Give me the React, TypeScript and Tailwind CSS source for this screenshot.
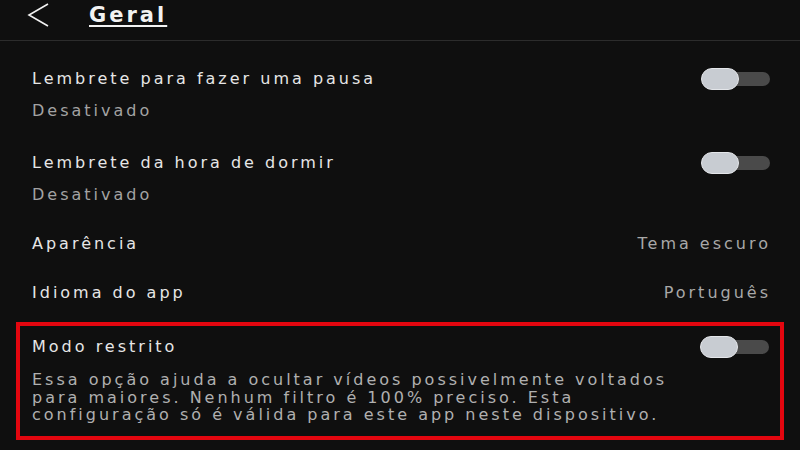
import React from 'react';

const font = 'font-["DejaVu_Sans",sans-serif]';

function Toggle() {
  return (
    <div className="relative w-[69px] h-[22px] shrink-0">
      <div className="absolute right-0 top-[4px] h-[14px] w-[60px] rounded-full bg-[#4a4a4a]" />
      <div className="absolute left-0 top-0 h-[22px] w-[38px] rounded-full bg-[#c8ccd2] border border-[#e4e6ea]" />
    </div>
  );
}

function ToggleRow({ title, status, className }: { title: string; status: string; className: string }) {
  return (
    <div className={className}>
      <div className="flex items-center justify-between">
        <span className="text-[16px] leading-[24px] tracking-[3px] text-[#e6e6e6]">{title}</span>
        <div className="mr-[-2px]">
          <Toggle />
        </div>
      </div>
      <div className="mt-[8px] text-[16px] leading-[24px] tracking-[3px] text-[#a3a3a3]">{status}</div>
    </div>
  );
}

function ValueRow({ label, value, className }: { label: string; value: string; className: string }) {
  return (
    <div className={`flex items-center justify-between ${className}`}>
      <span className="text-[16px] leading-[24px] tracking-[3px] text-[#e6e6e6]">{label}</span>
      <span className="text-[16px] leading-[24px] tracking-[3px] text-[#a8a8a8] mr-[-3px]">{value}</span>
    </div>
  );
}

export default function App() {
  return (
    <div className={`w-[800px] h-[450px] overflow-hidden bg-[#0f0f0f] ${font}`}>
      {/* Header */}
      <header className="h-[41px] border-b border-[#2c2c2c] flex items-start">
        <svg className="ml-[27px] mt-[2px]" width="24" height="26" viewBox="0 0 24 26" fill="none">
          <polyline points="21,2 2,13 21,24" stroke="#f2f2f2" strokeWidth="1.6" strokeLinejoin="miter" />
        </svg>
        <h1 className="ml-[38px] mt-[1px] text-[21px] leading-[28px] font-bold tracking-[3px] text-[#f2f2f2] underline underline-offset-[3px] decoration-[2px]">
          Geral
        </h1>
      </header>

      <div className="px-[32px]">
        <ToggleRow className="pt-[26px]" title="Lembrete para fazer uma pausa" status="Desativado" />
        <ToggleRow className="mt-[28px]" title="Lembrete da hora de dormir" status="Desativado" />
        <ValueRow className="mt-[25px]" label="Aparência" value="Tema escuro" />
        <ValueRow className="mt-[25px]" label="Idioma do app" value="Português" />
      </div>

      {/* Restricted mode */}
      <div className="mt-[17px] mx-[16px] h-[118px] border-[4px] border-[#e3060f] pl-[12px] pr-[11px] pt-[9px]">
        <div className="flex items-center justify-between">
          <span className="text-[16px] leading-[24px] tracking-[3px] text-[#e6e6e6]">Modo restrito</span>
          <Toggle />
        </div>
        <p className="mt-[12px] text-[16px] leading-[17.5px] tracking-[3px] text-[#b0b0b0]">
          Essa opção ajuda a ocultar vídeos possivelmente voltados
          <br />
          para maiores. Nenhum filtro é 100% preciso. Esta
          <br />
          configuração só é válida para este app neste dispositivo.
        </p>
      </div>
    </div>
  );
}
